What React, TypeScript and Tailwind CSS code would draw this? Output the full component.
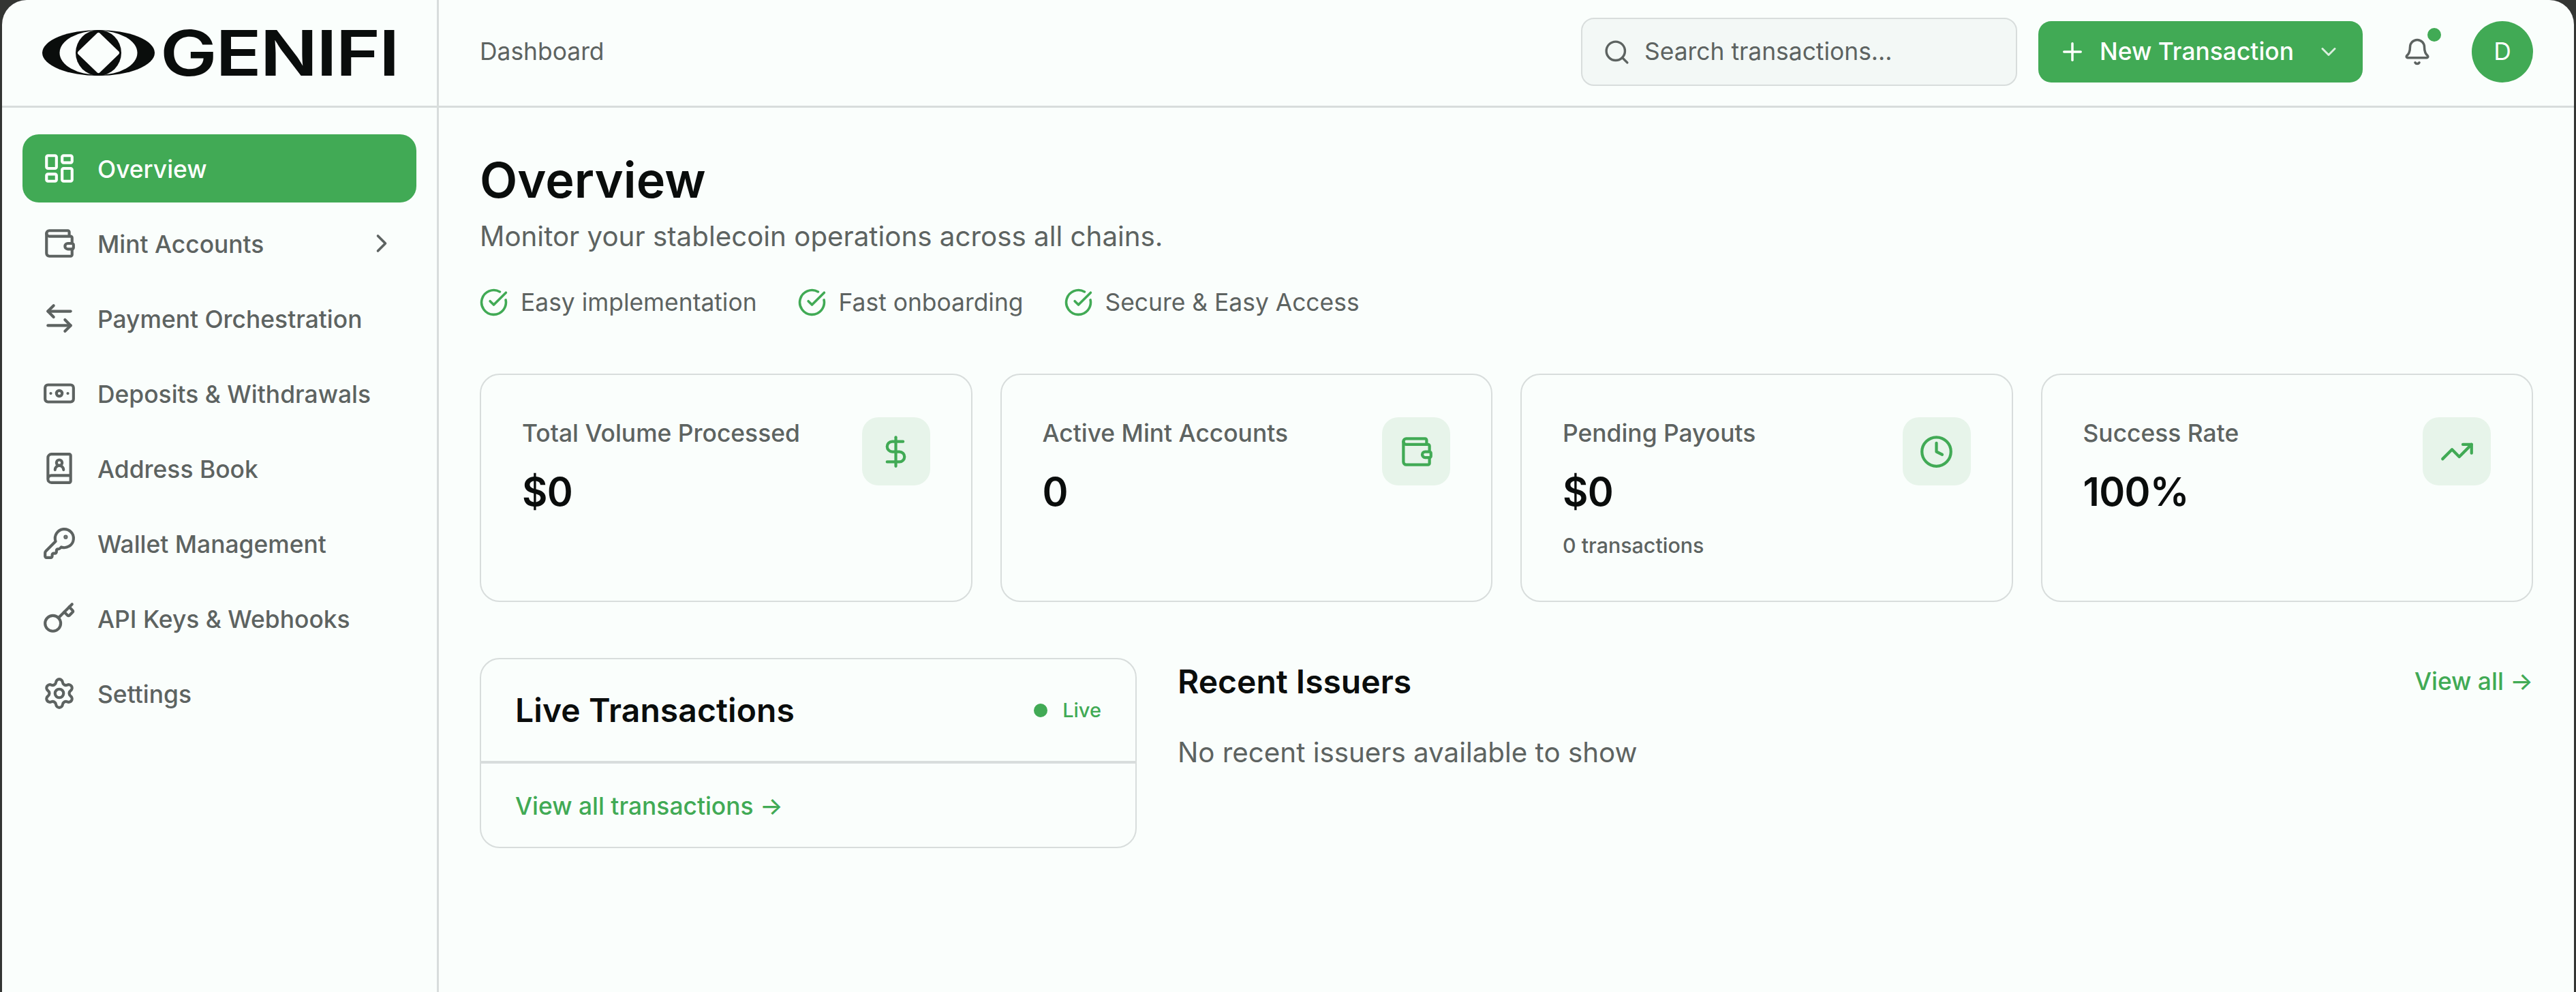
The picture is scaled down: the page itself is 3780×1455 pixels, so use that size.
import React from "react";
import {
  LayoutDashboard, Wallet, ArrowLeftRight, Banknote, BookUser, KeyRound, Key, Settings,
  ChevronRight, ChevronDown, Search, Plus, Bell, DollarSign, Clock, TrendingUp, CircleCheckBig,
} from "lucide-react";

const nav = [
  { label: "Overview", icon: LayoutDashboard, active: true },
  { label: "Mint Accounts", icon: Wallet, chevron: true },
  { label: "Payment Orchestration", icon: ArrowLeftRight },
  { label: "Deposits & Withdrawals", icon: Banknote },
  { label: "Address Book", icon: BookUser },
  { label: "Wallet Management", icon: KeyRound },
  { label: "API Keys & Webhooks", icon: Key },
  { label: "Settings", icon: Settings },
];

const stats = [
  { label: "Total Volume Processed", value: "$0", icon: DollarSign },
  { label: "Active Mint Accounts", value: "0", icon: Wallet },
  { label: "Pending Payouts", value: "$0", sub: "0 transactions", icon: Clock },
  { label: "Success Rate", value: "100%", icon: TrendingUp },
];

function Logo() {
  return (
    <div className="flex items-center gap-[8px]">
      <svg width="165" height="67" viewBox="0 0 165 67" className="shrink-0">
        <ellipse cx="82.5" cy="33.5" rx="82.5" ry="33.5" fill="#0a0d0c" />
        <ellipse cx="82.5" cy="33.5" rx="57" ry="32.5" fill="#fafefc" />
        <circle cx="82.5" cy="33.5" r="33.5" fill="#0a0d0c" />
        <polygon points="82.5,7 110,33.5 82.5,60 55,33.5" fill="#fafefc" stroke="#fafefc" strokeWidth="6" strokeLinejoin="round" />
      </svg>
      <span className="font-['Inter',sans-serif] text-[92px] leading-[67px] font-semibold text-[#0a0d0c] tracking-[-2px] inline-block origin-left scale-x-[1.215]">GENIFI</span>
    </div>
  );
}

export default function App() {
  return (
    <div className="w-[3780px] h-[1455px] bg-[#333533] overflow-hidden font-['Inter',sans-serif] text-[35.4px]">
      <div className="ml-[3px] mr-[3px] h-[1455px] bg-[#fafefc] rounded-t-[36px] grid grid-cols-[641px_1fr] grid-rows-[158px_1fr] text-[#5d6361]">
        <div className="border-r-[3px] border-b-[3px] border-[#d8dddc] flex items-center pl-[59px]">
          <Logo />
        </div>
        <header className="border-b-[3px] border-[#d8dddc] flex items-center pl-[60px] pr-[60px] pb-[3px]">
          <span>Dashboard</span>
          <div className="ml-auto flex items-center gap-[31px]">
            <div className="w-[640px] h-[100px] rounded-[19px] border-[2.4px] border-[#d8dddc] bg-[#f3f8f6] flex items-center pl-[30px] gap-[20px]">
              <Search size={41} strokeWidth={2} className="text-[#5d6361]" />
              <span>Search transactions...</span>
            </div>
            <button className="w-[476px] h-[90px] rounded-[19px] bg-[#41aa55] text-white flex items-center pl-[29px] font-medium">
              <Plus size={42} strokeWidth={2} />
              <span className="ml-[19px]">New Transaction</span>
              <ChevronDown size={36} strokeWidth={2} className="ml-[33px] opacity-80" />
            </button>
            <div className="relative w-[80px] h-[90px] ml-[9px] flex items-center justify-center">
              <Bell size={42} strokeWidth={2} />
              <span className="absolute top-[10px] right-[5px] w-[20px] h-[20px] rounded-full bg-[#41aa55]" />
            </div>
            <div className="w-[90px] h-[90px] ml-[9px] rounded-full bg-[#41aa55] text-white flex items-center justify-center">D</div>
          </div>
        </header>

        <aside className="border-r-[3px] border-[#d8dddc] px-[30px] pt-[39px] flex flex-col gap-[10px]">
          {nav.map((n) => {
            const Icon = n.icon;
            return (
              <div
                key={n.label}
                className={
                  n.active
                    ? "h-[100px] rounded-[24px] bg-[#41aa55] text-white flex items-center pl-[29px] pr-[29px] gap-[31px] font-medium"
                    : "h-[100px] rounded-[24px] flex items-center pl-[29px] pr-[29px] gap-[31px] font-medium"
                }
              >
                <Icon size={50} strokeWidth={2} />
                <span className="pt-[3px]">{n.label}</span>
                {n.chevron && <ChevronRight size={44} strokeWidth={2} className="ml-auto" />}
              </div>
            );
          })}
        </aside>

        <main className="pl-[60px] pr-[60px] pt-[62px]">
          <h1 className="text-[72px] leading-[88px] font-semibold text-[#0a0d0c]">Overview</h1>
          <p className="text-[40.3px] leading-[58px] mt-[10px]">Monitor your stablecoin operations across all chains.</p>
          <div className="flex items-center gap-[60px] mt-[39px] h-[58px]">
            {["Easy implementation", "Fast onboarding", "Secure & Easy Access"].map((t) => (
              <div key={t} className="flex items-center gap-[18px]">
                <CircleCheckBig size={43} strokeWidth={2} className="text-[#41aa55] -ml-[1px]" />
                <span>{t}</span>
              </div>
            ))}
          </div>

          <div className="grid grid-cols-4 gap-[41px] mt-[75px]">
            {stats.map((s) => {
              const Icon = s.icon;
              return (
                <div key={s.label} className="h-[335px] rounded-[29px] border-[2.4px] border-[#d8dddc] pl-[60px] pr-[60px] pt-[62px] flex justify-between">
                  <div>
                    <div className="leading-[48px] font-medium">{s.label}</div>
                    <div className="text-[57.6px] leading-[72px] font-semibold tracking-[-0.7px] text-[#0a0d0c] mt-[25px]">{s.value}</div>
                    {s.sub && <div className="text-[30.4px] leading-[40px] mt-[23px] font-medium">{s.sub}</div>}
                  </div>
                  <div className="w-[100px] h-[100px] rounded-[24px] bg-[#e7f4ea] flex items-center justify-center text-[#41aa55]">
                    <Icon size={51} strokeWidth={2} />
                  </div>
                </div>
              );
            })}
          </div>

          <div className="flex gap-[60px] mt-[82px] items-start">
            <div className="w-[964px] shrink-0 rounded-[29px] border-[2.4px] border-[#d8dddc]">
              <div className="h-[153px] border-b-[4px] border-[#d8dddc] flex items-center justify-between pl-[50px] pr-[50px]">
                <h2 className="text-[48px] font-semibold tracking-[0.1px] text-[#0a0d0c]">Live Transactions</h2>
                <div className="flex items-center gap-[22px] text-[#41aa55] text-[29px] font-medium">
                  <span className="w-[20px] h-[20px] rounded-full bg-[#41aa55]" />
                  <span>Live</span>
                </div>
              </div>
              <div className="h-[122px] flex items-center pl-[50px] pt-[4px] text-[#41aa55] font-medium">View all transactions →</div>
            </div>
            <div className="flex-1">
              <div className="flex items-center justify-between h-[70px]">
                <h2 className="text-[48px] font-semibold text-[#0a0d0c]">Recent Issuers</h2>
                <span className="text-[#41aa55] font-medium">View all →</span>
              </div>
              <p className="text-[40.3px] leading-[58px] mt-[40px]">No recent issuers available to show</p>
            </div>
          </div>
        </main>
      </div>
    </div>
  );
}
